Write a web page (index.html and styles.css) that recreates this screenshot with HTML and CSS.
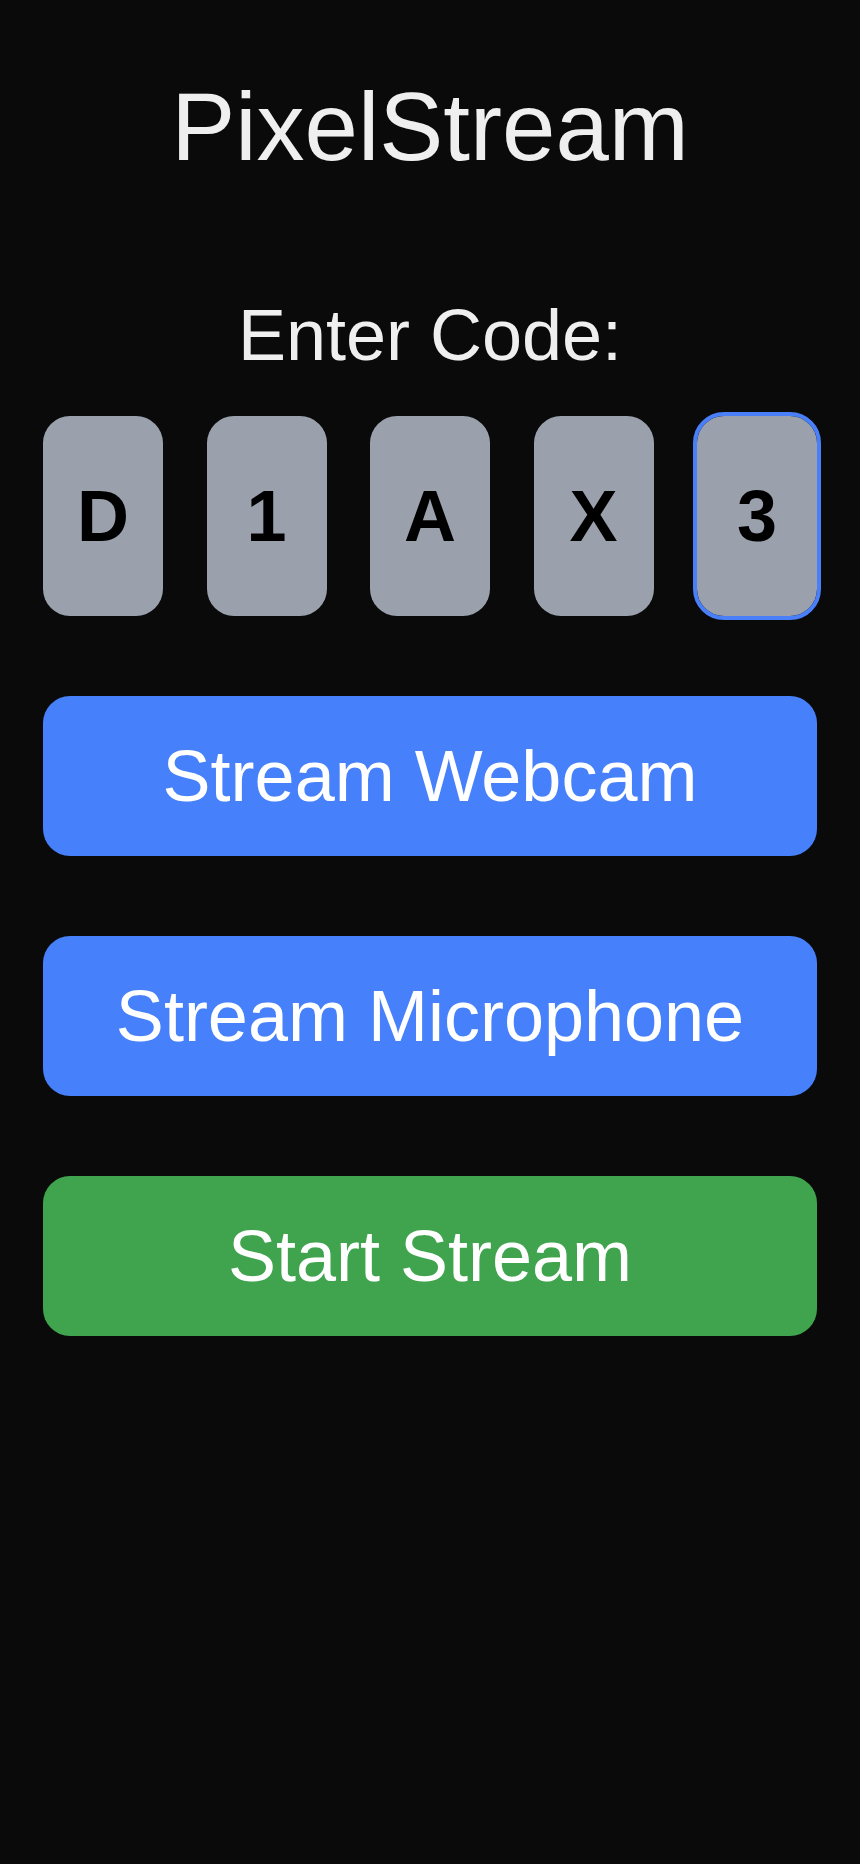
FILE: index.html
```html
<!DOCTYPE html>
<html lang="en">
<head>
<meta charset="utf-8">
<title>PixelStream</title>
<link rel="stylesheet" href="styles.css">
</head>
<body>
<main class="app">
  <h1 class="title">PixelStream</h1>
  <p class="label">Enter Code:</p>
  <div class="code">
    <div class="digit">D</div>
    <div class="digit">1</div>
    <div class="digit">A</div>
    <div class="digit">X</div>
    <div class="digit focused">3</div>
  </div>
  <div class="actions">
    <button class="btn btn-blue">Stream Webcam</button>
    <button class="btn btn-blue">Stream Microphone</button>
    <button class="btn btn-green">Start Stream</button>
  </div>
</main>
</body>
</html>
```

FILE: styles.css
```css
html, body {
  margin: 0;
  padding: 0;
  background: #0a0a0a;
}
body {
  font-family: "Liberation Sans", Arial, sans-serif;
  min-height: 1864px;
}
.app {
  padding: 79px 43px 0;
  display: flex;
  flex-direction: column;
}
.title {
  margin: 0;
  font-size: 96px;
  line-height: 96px;
  font-weight: 400;
  color: #efefef;
  text-align: center;
}
.label {
  margin: 124px 0 0;
  font-size: 72px;
  line-height: 72px;
  color: #efefef;
  text-align: center;
}
.code {
  margin-top: 45px;
  display: flex;
  justify-content: space-between;
}
.digit {
  width: 120px;
  height: 200px;
  border-radius: 27px;
  background: #9ba1ac;
  color: #000;
  font-size: 72px;
  line-height: 72px;
  font-weight: 700;
  display: flex;
  align-items: center;
  justify-content: center;
}
.digit.focused {
  outline: 4px solid #4a7ffa;
  outline-offset: 0;
}
.actions {
  margin-top: 80px;
  display: flex;
  flex-direction: column;
  gap: 80px;
}
.btn {
  height: 160px;
  border: none;
  border-radius: 27px;
  color: #fff;
  font-family: "Liberation Sans", Arial, sans-serif;
  font-size: 72px;
  line-height: 72px;
  padding: 0;
  display: flex;
  align-items: center;
  justify-content: center;
}
.btn-blue {
  background: #4680fb;
}
.btn-green {
  background: #40a44e;
}
```
